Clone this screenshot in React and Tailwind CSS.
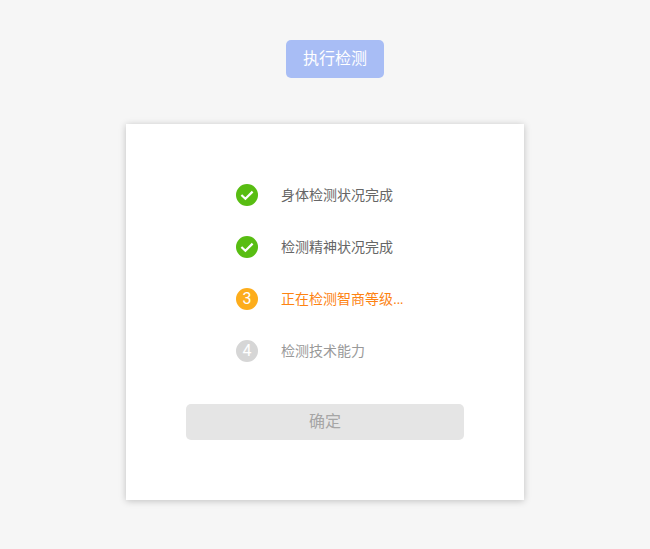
const steps = [
  { id: 1, label: '身体检测状况完成', state: 'done' },
  { id: 2, label: '检测精神状况完成', state: 'done' },
  { id: 3, label: '正在检测智商等级', dots: true, state: 'active' },
  { id: 4, label: '检测技术能力', state: 'pending' },
];

function StepIcon({ step }) {
  if (step.state === 'done') {
    return (
      <span className="flex h-[22px] w-[22px] items-center justify-center rounded-full bg-[#58bd12]">
        <svg width="16" height="16" viewBox="0 0 16 16" fill="none">
          <path d="M2.4 8 L6.4 11.8 L13.6 4.6" stroke="#fff" strokeWidth="2.2" />
        </svg>
      </span>
    );
  }
  const bg = step.state === 'active' ? 'bg-[#fdad1c]' : 'bg-[#d6d6d6]';
  return (
    <span className={`flex h-[22px] w-[22px] items-center justify-center rounded-full font-['Roboto',sans-serif] text-[16px] leading-none font-normal text-white ${bg}`}>
      {step.id}
    </span>
  );
}

const textColor = {
  done: 'text-[#666666]',
  active: 'text-[#fd8312]',
  pending: 'text-[#999999]',
};

export default function App() {
  return (
    <div className="h-[549px] overflow-hidden bg-[#f6f6f6] pt-10 font-['Liberation_Sans','Noto_Sans_CJK_SC',sans-serif]">
      <button className="ml-[286px] block h-[38px] w-[98px] rounded-[5px] bg-[#a8bdf5] text-base text-white">
        执行检测
      </button>

      <div className="mt-[46px] ml-[126px] h-[376px] w-[398px] bg-white px-[60px] pt-[60px] shadow-[0_1px_7px_rgba(0,0,0,0.22)]">
        <ul className="flex flex-col gap-[30px] pl-[50px]">
          {steps.map((step) => (
            <li key={step.id} className="flex h-[22px] items-center gap-[23px]">
              <StepIcon step={step} />
              <span className={`text-sm ${textColor[step.state]}`}>
                {step.label}
                {step.dots && <span className="tracking-[-0.5px]">...</span>}
              </span>
            </li>
          ))}
        </ul>
        <button className="mt-[42px] block h-9 w-full rounded-[5px] bg-[#e5e5e5] text-base text-[#a6a6a6]">
          确定
        </button>
      </div>
    </div>
  );
}
